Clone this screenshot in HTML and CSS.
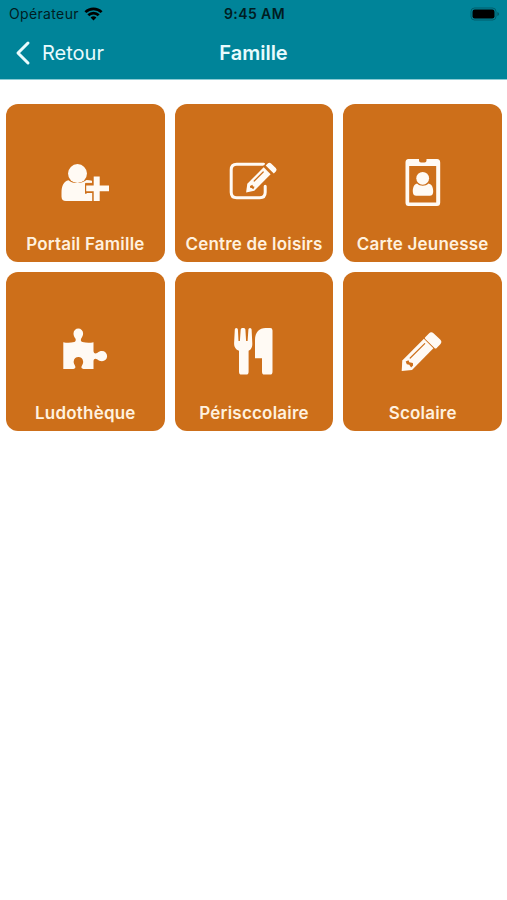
FILE: index.html
```
<!DOCTYPE html>
<html lang="fr">
<head>
    <meta charset="UTF-8">
    <meta name="viewport" content="width=device-width, initial-scale=1.0">
    <title>Famille</title>
    <link rel="stylesheet" href="styles.css">
</head>
<body>
    <header class="header">
        <div class="status-bar">
            <div class="carrier">
                <span class="carrier-name">Opérateur</span>
                <svg class="wifi" viewBox="0 0 18 14" fill="none" stroke="#000" stroke-width="2.7">
                    <path d="M.9 5.1a11.6 11.6 0 0 1 16.2 0"/>
                    <path d="M3.8 8.3a7.4 7.4 0 0 1 10.4 0"/>
                    <path d="M9 13.6 6.1 10.6a4.1 4.1 0 0 1 5.8 0z" fill="#000" stroke="none"/>
                </svg>
            </div>
            <span class="time">9:45 AM</span>
            <svg class="battery" viewBox="0 0 30 14">
                <rect x="1" y="1" width="25" height="12" rx="3.5" fill="none" stroke="#003f47" stroke-opacity=".55"/>
                <rect x="2.5" y="2.5" width="22" height="9" rx="2.2"/>
                <path d="M27.3 5v4q1.8-.6 1.8-2t-1.8-2z" fill="#003f47" fill-opacity=".6"/>
            </svg>
        </div>
        <nav class="nav-bar">
            <a class="back" href="#">
                <svg class="chevron" viewBox="0 0 16 26"><path d="M13 3 3 13l10 10"/></svg>
                <span>Retour</span>
            </a>
            <h1 class="title">Famille</h1>
        </nav>
    </header>

    <main class="tiles">
        <a class="tile" href="#">
            <svg class="icon" viewBox="0 0 70 60">
                <path d="M18.5 25.2C13.5 26.2 11.5 31 11.5 38v3.5Q11.5 46 16 46h26V25.800q-2.600-.7-5.500-.9c-4.500 4-13.500 4.300-18 .3z"/>
                <circle cx="27.500" cy="18.600" r="9.500"/>
                <path class="cut" d="M43.200 20.500h7.300v9.600h9v6.800h-9v10h-7.300v-8.500h-7.700v-10h7.700z"/>
                <path d="M43.700 21.500h6v8.900h9.300v5.800h-9.300v9.800h-6v-9.800h-7.500v-5.800h7.500z"/>
                <path d="M36.500 38h5.700v8h-5.700z"/>
            </svg>
            <span class="label">Portail Famille</span>
        </a>
        <a class="tile" href="#">
            <svg class="icon" viewBox="-.7 0 70 60">
                <path class="frame" d="M44 9.200H17q-5.500 0-5.500 5.500v22.500q0 5.500 5.500 5.500h23q5.500 0 5.500-5.500v-6"/>
                <path class="cut" d="m25.500 38.500 1.500-11L47 8l9 9-20 19z"/>
                <path d="m26.400 37.600 1.200-8.800 16.400-16.500 6.900 6.900L34.600 35.800z"/>
                <path d="m46 10.600 2-2q1.700-1.600 3.400 0l4.700 4.500q1.700 1.700 0 3.400l-2 2z"/>
                <path class="detail" d="m34.500 26 9-9"/>
                <path class="hole" d="m30.300 31 2.500-1.200.4 1.500 1.700.5-1.300 2.500-1.700-1.200-1.500-.3z"/>
            </svg>
            <span class="label">Centre de loisirs</span>
        </a>
        <a class="tile" href="#">
            <svg class="icon" viewBox="-2.500 5 70 60">
                <path fill-rule="evenodd" d="M18 9h10.500v1.500q0 2 2 2h3.500q2 0 2-2V9h10.500q3.200 0 3.200 3.500v40q0 3.500-3.200 3.500H18q-3 0-3-3.500v-40Q15 9 18 9zm.7 7v36.500h27V16z"/>
                <circle cx="32.200" cy="28.300" r="6.400"/>
                <path d="M26.500 33.500c-3 .8-4.200 4-4.200 8q0 4.200 3.500 4.200h13.400q3.500 0 3.500-4.200c0-4-1.200-7.200-4.700-8-2.900 3-8.600 3-11.500 0z"/>
            </svg>
            <span class="label">Carte Jeunesse</span>
        </a>
        <a class="tile" href="#">
            <svg class="icon" viewBox="0 3.600 70 60">
                <path d="M13.300 21.800q5 1.300 11-.1c1.500-.6 1.800-2 1.100-3.500-1-1.700-1.900-2.900-1.900-5.200a4.800 4.800 0 0 1 9.600 0c0 2.300-1.100 3.500-1.900 5.200-.7 1.700-.4 3 1.200 3.500q6 1.400 11.100.1v9c.5 2.500 2 2.800 4 1.500 1.300-1 2.500-1.600 4.500-1.600a5.100 5.100 0 0 1 0 10.200c-2 0-3.300-.7-4.500-1.700-2.300-1.700-4-1-4 1.800v7.500H33.500c-2-.3-2.700-1.500-1.500-3.500 1-1.500 1.300-2.700 1.100-4.200-.4-2.800-2.200-4.200-4.700-4.200s-4.300 1.400-4.700 4.200c-.2 1.500.3 2.700 1.200 4.200 1 2 .4 3.200-1.500 3.500H13.300z"/>
            </svg>
            <span class="label">Ludothèque</span>
        </a>
        <a class="tile" href="#">
            <svg class="icon" viewBox="-1 3.600 70 60">
                <path d="M14.800 9.200q0-1.500 1.500-1.500T17.900 9.200L18.500 20.500h1.400l.8-11.300q.1-1.500 1.500-1.500h1.700q1.400 0 1.500 1.500l.7 11.300h1.500l.8-11.300q.1-1.500 1.600-1.500t1.600 1.500l.7 13.300c.2 4.500-1.200 6.500-3.700 7.800V51q0 3.200-2.500 3.200h-4.600q-2.500 0-2.500-3.200V30.300c-3-1.300-5-3.300-4.900-7.800z"/>
                <path d="M35 19.500C35 12 39.500 7.700 45.500 7.700h4.800q2.200 0 2.200 2.300v41q0 3.200-2.500 3.200h-5.500q-2.500 0-2.500-3.200V37.800h-7z"/>
            </svg>
            <span class="label">Périsccolaire</span>
        </a>
        <a class="tile" href="#">
            <svg class="icon" viewBox="-1.700 4 70 60">
                <path d="m12 51 .6-10.500 21.600-21.700 9.500 9.400L22.300 50z"/>
                <path d="m35.500 17.200 3.700-3.800q2.300-2.300 4.600-.2l6.700 6.400q2.300 2.300.1 4.600l-3.600 3.700q-1.200 1-2.200 0l-9.200-9q-1.100-.9-.1-1.700z"/>
                <path class="detail" d="M20.500 38 35 23.600"/>
                <path class="hole" d="m16 41.500 2.800-1.200.8 2 3.600.6.2 2.500-2 2-1.800-2.600-2.500-.5z"/>
            </svg>
            <span class="label">Scolaire</span>
        </a>
    </main>
</body>
</html>
```

FILE: styles.css
```
body {
    margin: 0;
    background-color: #fff;
    font-family: Inter, "Liberation Sans", sans-serif;
}

a {
    color: inherit;
    text-decoration: none;
}

svg {
    display: block;
    flex: none;
}

/* Header */
.header {
    height: 80px;
    background-color: #008499;
    border-bottom: 1px solid #8bcbd4;
    box-sizing: border-box;
}

.status-bar,
.nav-bar {
    display: grid;
    grid-template-columns: 1fr auto 1fr;
    align-items: center;
}

.status-bar {
    height: 27px;
    padding: 0 7px 0 9px;
    color: #001d22;
}

.carrier {
    display: flex;
    align-items: center;
    gap: 5px;
    font-size: 14px;
    letter-spacing: 0.35px;
}

.wifi {
    width: 19px;
    height: 14px;
}

.time {
    font-size: 14px;
    font-weight: 600;
    letter-spacing: 0.4px;
}

.battery {
    width: 30px;
    height: 14px;
    justify-self: end;
}

.nav-bar {
    height: 51px;
    padding: 0 15px;
    color: #e9fbfd;
}

.back {
    display: flex;
    align-items: center;
    gap: 11px;
    font-size: 20px;
}

.chevron {
    width: 16px;
    height: 26px;
    fill: none;
    stroke: #e9fbfd;
    stroke-width: 3;
    stroke-linecap: round;
    stroke-linejoin: round;
}

.title {
    margin: 0;
    font-size: 20px;
    font-weight: 600;
}

/* Tiles */
.tiles {
    display: grid;
    grid-template-columns: repeat(3, 1fr);
    gap: 10px;
    padding: 23.6px 5px 0 6px;
}

.tile {
    display: flex;
    flex-direction: column;
    align-items: center;
    box-sizing: border-box;
    aspect-ratio: 1;
    padding-top: 51.5px;
    border-radius: 12px;
    background-color: #cd6f1a;
    color: #fff1df;
}

.icon {
    width: 70px;
    height: 60px;
    fill: #fffaf4;
}

.frame {
    fill: none;
    stroke: #fffaf4;
    stroke-width: 3;
    stroke-linecap: round;
}

.cut,
.hole {
    fill: #cd6f1a;
}

.cut {
    stroke: #cd6f1a;
    stroke-width: 1;
}

.detail {
    fill: none;
    stroke: #cd6f1a;
    stroke-width: 1.2;
    stroke-linecap: round;
}

.label {
    margin-top: 18px;
    font-size: 17px;
    font-weight: 600;
    line-height: 22px;
    letter-spacing: 0.2px;
    white-space: nowrap;
}
```
